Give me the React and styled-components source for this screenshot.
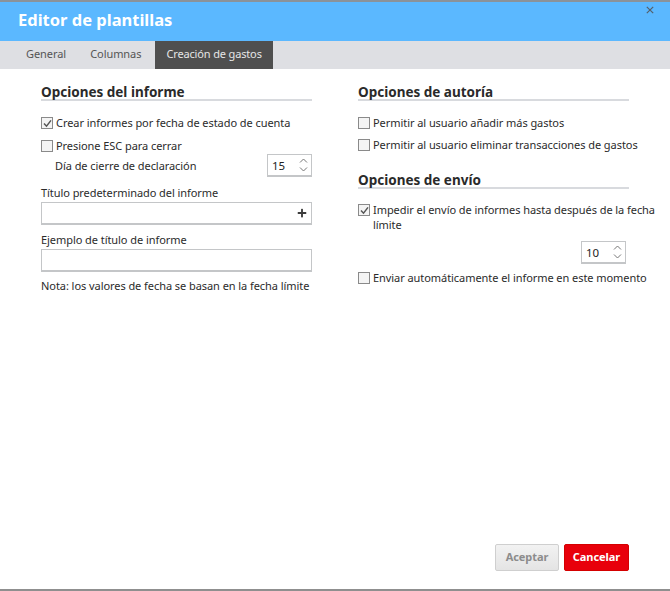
import React from 'react'
import styled, { createGlobalStyle } from 'styled-components'
import { FaPlus } from 'react-icons/fa'

const GlobalStyle = createGlobalStyle`
  html, body {
    margin: 0;
    padding: 0;
    height: 100%;
    background: #fff;
  }
  body {
    font-family: "Noto Sans", "Open Sans", sans-serif;
    font-size: 11px;
    letter-spacing: -0.06px;
    color: #2b2b2b;
  }
`

function Check({ on, children }) {
  return (
    <CheckRow>
      <Box $on={on}>
        {on && (
          <svg width="9" height="9" viewBox="0 0 9 9">
            <path d="M1 4.6 L3.5 7.2 L8 1.4" fill="none" stroke="#555" strokeWidth="1.5" />
          </svg>
        )}
      </Box>
      <span>{children}</span>
    </CheckRow>
  )
}

function Spinner({ value }) {
  return (
    <SpinBox>
      <span>{value}</span>
      <SpinArrows>
        <svg width="9" height="5" viewBox="0 0 9 5">
          <path d="M1 4.5 L4.5 1 L8 4.5" fill="none" stroke="#777" strokeWidth="1" />
        </svg>
        <svg width="9" height="5" viewBox="0 0 9 5">
          <path d="M1 .5 L4.5 4 L8 .5" fill="none" stroke="#777" strokeWidth="1" />
        </svg>
      </SpinArrows>
    </SpinBox>
  )
}

export default function App() {
  return (
    <Dialog>
      <GlobalStyle />
      <Header>
        <Title>Editor de plantillas</Title>
        <CloseBtn>
          <svg width="8" height="8" viewBox="0 0 8 8">
            <path d="M.8 .8 L7.2 7.2 M7.2 .8 L.8 7.2" stroke="#55606b" strokeWidth="1.2" />
          </svg>
        </CloseBtn>
      </Header>
      <Tabs>
        <Tab>General</Tab>
        <Tab>Columnas</Tab>
        <Tab $active>Creación de gastos</Tab>
      </Tabs>
      <Content>
        <Column>
          <Heading>Opciones del informe</Heading>
          <Check on>Crear informes por fecha de estado de cuenta</Check>
          <EscRow>
            <Check>Presione ESC para cerrar</Check>
          </EscRow>
          <ClosingRow>
            <span>Día de cierre de declaración</span>
            <Spinner value="15" />
          </ClosingRow>
          <FieldLabel>Título predeterminado del informe</FieldLabel>
          <Field>
            <PlusIcon />
          </Field>
          <FieldLabel>Ejemplo de título de informe</FieldLabel>
          <Field />
          <Note>Nota: los valores de fecha se basan en la fecha límite</Note>
        </Column>
        <Column>
          <Heading>Opciones de autoría</Heading>
          <Check>Permitir al usuario añadir más gastos</Check>
          <NextCheck>
            <Check>Permitir al usuario eliminar transacciones de gastos</Check>
          </NextCheck>
          <SecondHeading>Opciones de envío</SecondHeading>
          <WideCheck>
            <Check on>Impedir el envío de informes hasta después de la fecha límite</Check>
          </WideCheck>
          <RightSpin>
            <Spinner value="10" />
          </RightSpin>
          <WideCheck>
            <Check>Enviar automáticamente el informe en este momento</Check>
          </WideCheck>
        </Column>
      </Content>
      <Footer>
        <AcceptButton>Aceptar</AcceptButton>
        <CancelButton>Cancelar</CancelButton>
      </Footer>
    </Dialog>
  )
}

const Dialog = styled.div`
  width: 670px;
  height: 591px;
  box-sizing: border-box;
  display: flex;
  flex-direction: column;
  border-top: 2px solid #8b9299;
  border-bottom: 2px solid #8f8f8f;
  overflow: hidden;
`

const Header = styled.div`
  position: relative;
  height: 39px;
  flex: none;
  background: #5bb8ff;
  display: flex;
  align-items: center;
  padding-left: 18px;
`

const Title = styled.div`
  color: #fff;
  font-size: 16.5px;
  font-weight: 700;
  letter-spacing: 0;
  margin-top: -4px;
`

const CloseBtn = styled.div`
  position: absolute;
  top: 4px;
  right: 16px;
  width: 8px;
  height: 8px;
  display: flex;
`

const Tabs = styled.div`
  height: 28px;
  flex: none;
  background: #dedfe3;
  display: flex;
  padding-left: 14px;
`

const Tab = styled.div`
  height: 28px;
  box-sizing: border-box;
  display: flex;
  align-items: center;
  padding: 0 ${p => (p.$active ? '11px' : '12px')} 4px;
  margin-left: ${p => (p.$active ? '2px' : '0')};
  letter-spacing: ${p => (p.$active ? '-0.15px' : '-0.06px')};
  color: ${p => (p.$active ? '#e6e6e6' : '#555')};
  background: ${p => (p.$active ? '#4f4f4f' : 'transparent')};
`

const Content = styled.div`
  flex: 1;
  display: flex;
  gap: 46px;
  padding: 13px 41px 0;
`

const Column = styled.div`
  width: 271px;
  flex: none;
`

const Heading = styled.div`
  padding-top: 3px;
  font-size: 13.5px;
  font-weight: 700;
  letter-spacing: 0;
  color: #2a2a2a;
  line-height: 14px;
  border-bottom: 2px solid #d8dade;
  margin-bottom: 14px;
`

const SecondHeading = styled(Heading)`
  margin-top: 18px;
  margin-bottom: 13px;
`

const CheckRow = styled.label`
  display: flex;
  align-items: flex-start;
  gap: 3px;
  line-height: 15px;
`

const Box = styled.span`
  flex: none;
  width: 10px;
  height: 10px;
  margin-top: 2px;
  border: 1px solid #8a8a8a;
  background: #f4f4f4;
  display: flex;
  align-items: center;
  justify-content: center;
`

const EscRow = styled.div`
  margin-top: 8px;
`

const NextCheck = styled.div`
  margin-top: 7px;
  width: 300px;
`

const WideCheck = styled.div`
  width: 300px;
`

const ClosingRow = styled.div`
  display: flex;
  align-items: center;
  justify-content: space-between;
  padding-left: 14px;
  margin-top: 1px;
`

const SpinBox = styled.div`
  width: 45px;
  height: 23px;
  box-sizing: border-box;
  border: 1px solid #c4c6c8;
  border-bottom-width: 2px;
  display: flex;
  align-items: center;
  justify-content: space-between;
  padding: 0 3px 0 4px;
  background: #fff;
  span {
    color: #222;
    font-size: 11.5px;
  }
`

const SpinArrows = styled.div`
  display: flex;
  flex-direction: column;
  gap: 4px;
`

const RightSpin = styled.div`
  display: flex;
  justify-content: flex-end;
  margin: 9px 0 6px;
  width: 268px;
`

const FieldLabel = styled.div`
  line-height: 16px;
  margin: 8px 0 1px;
`

const Field = styled.div`
  height: 23px;
  box-sizing: border-box;
  border: 1px solid #c4c6c8;
  border-bottom-width: 2px;
  display: flex;
  align-items: center;
  justify-content: flex-end;
  padding-right: 4px;
  margin-bottom: -1px;
`

const PlusIcon = styled(FaPlus)`
  width: 10px;
  height: 10px;
  color: #3c3c3c;
`

const Note = styled.div`
  line-height: 16px;
  margin-top: 7px;
  white-space: nowrap;
`

const Footer = styled.div`
  flex: none;
  display: flex;
  justify-content: flex-end;
  gap: 5px;
  padding: 0 41px 18px 0;
`

const AcceptButton = styled.div`
  width: 64px;
  height: 27px;
  box-sizing: border-box;
  border: 1px solid #cfcfcf;
  border-radius: 2px;
  padding-bottom: 3px;
  background: linear-gradient(#f2f2f2, #e4e4e4);
  color: #8c8c8c;
  font-weight: 700;
  font-size: 11px;
  display: flex;
  align-items: center;
  justify-content: center;
`

const CancelButton = styled(AcceptButton)`
  width: 65px;
  border-color: #d40000;
  background: #e8000b;
  color: #fff;
`
